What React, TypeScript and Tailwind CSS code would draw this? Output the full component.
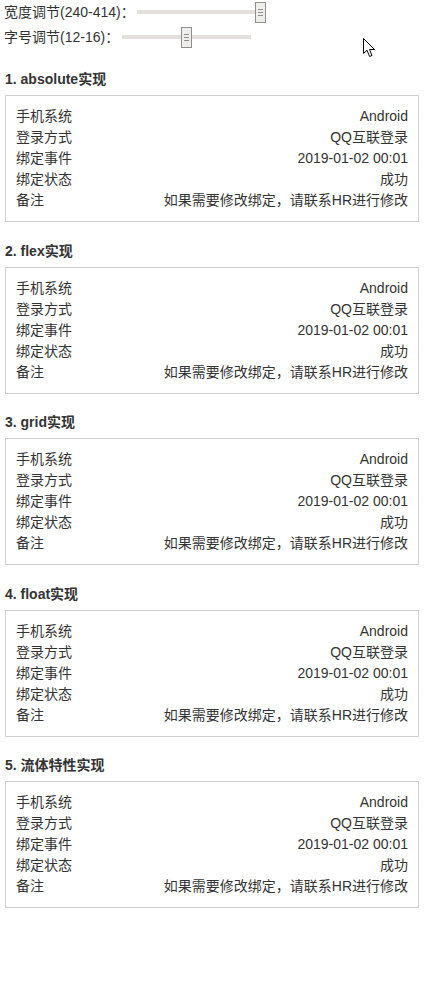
const rows: [string, string][] = [
  ["手机系统", "Android"],
  ["登录方式", "QQ互联登录"],
  ["绑定事件", "2019-01-02 00:01"],
  ["绑定状态", "成功"],
  ["备注", "如果需要修改绑定，请联系HR进行修改"],
];

const titles = ["1. absolute实现", "2. flex实现", "3. grid实现", "4. float实现", "5. 流体特性实现"];

const Slider = ({ width, pos }: { width: number; pos: number }) => (
  <div className="relative h-[21px]" style={{ width }}>
    <div className="absolute left-0 right-0 top-[8px] h-[4px] bg-[#e3dfda]" />
    <div
      className="absolute top-0 w-[11px] h-[21px] border border-[#8e8e8e] bg-[#f0eeea] flex flex-col items-center justify-center gap-[2px]"
      style={{ left: pos }}
    >
      <div className="w-[5px] h-px bg-[#8e8e8e]" />
      <div className="w-[5px] h-px bg-[#8e8e8e]" />
      <div className="w-[5px] h-px bg-[#8e8e8e]" />
    </div>
  </div>
);

const Card = ({ title }: { title: string }) => (
  <section className="mt-[19.5px]">
    <h4 className="font-bold text-[14px] leading-[18px] text-[#333] mb-[7px]">{title}</h4>
    <div className="border border-[#cfcfcf] px-[10px] py-[10px]">
      {rows.map(([k, v]) => (
        <div key={k} className="flex justify-between text-[14px] leading-[21px] text-[#333]">
          <span>{k}</span>
          <span>{v}</span>
        </div>
      ))}
    </div>
  </section>
);

export default function App() {
  return (
    <div
      className="relative w-[428px] min-h-[1005px] bg-white pl-[5px] pt-[4.5px]"
      style={{ fontFamily: '"Liberation Sans", Arial, "Noto Sans CJK SC", sans-serif' }}
    >
      <div className="w-[414px]">
        <div className="flex items-center h-[21px] text-[14px] text-[#333] -ml-px -mt-[2.5px]">
          <span className="w-[133px] whitespace-nowrap">宽度调节(240-414)：</span>
          <Slider width={129} pos={118} />
        </div>
        <div className="flex items-center h-[21px] mt-[4px] text-[14px] text-[#333] -ml-px">
          <span className="w-[118px] whitespace-nowrap">字号调节(12-16)：</span>
          <Slider width={129} pos={59} />
        </div>
        <div className="h-[2.5px]" />
        {titles.map((t) => (
          <Card key={t} title={t} />
        ))}
      </div>
      <svg className="absolute left-[363px] top-[38px]" width="13" height="20" viewBox="0 0 13 20">
        <path d="M0.5 0.5 L0.5 15.5 L4 12.2 L6.6 18.5 L9 17.5 L6.5 11.5 L11.5 11.5 Z" fill="#fff" stroke="#000" strokeWidth="1" />
      </svg>
    </div>
  );
}
